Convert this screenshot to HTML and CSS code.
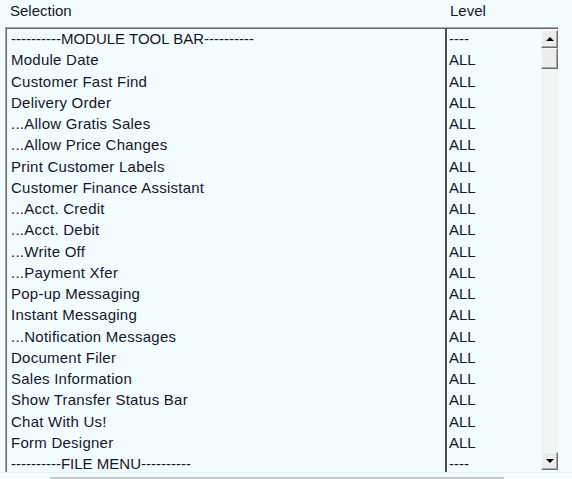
FILE: index.html
```html
<!DOCTYPE html>
<html lang="en">

<head>
    <meta charset="UTF-8">
    <title>Security Selection</title>
    <link rel="stylesheet" href="styles.css">
</head>

<body>
    <div class="head">
        <span class="head-sel">Selection</span>
        <span class="head-lvl">Level</span>
    </div>
    <div class="listbox">
        <div class="rows">
            <div class="row sep"><span class="sel">----------MODULE TOOL BAR----------</span><span class="lvl">----</span></div>
            <div class="row"><span class="sel">Module Date</span><span class="lvl">ALL</span></div>
            <div class="row"><span class="sel">Customer Fast Find</span><span class="lvl">ALL</span></div>
            <div class="row"><span class="sel">Delivery Order</span><span class="lvl">ALL</span></div>
            <div class="row"><span class="sel">...Allow Gratis Sales</span><span class="lvl">ALL</span></div>
            <div class="row"><span class="sel">...Allow Price Changes</span><span class="lvl">ALL</span></div>
            <div class="row"><span class="sel">Print Customer Labels</span><span class="lvl">ALL</span></div>
            <div class="row"><span class="sel">Customer Finance Assistant</span><span class="lvl">ALL</span></div>
            <div class="row"><span class="sel">...Acct. Credit</span><span class="lvl">ALL</span></div>
            <div class="row"><span class="sel">...Acct. Debit</span><span class="lvl">ALL</span></div>
            <div class="row"><span class="sel">...Write Off</span><span class="lvl">ALL</span></div>
            <div class="row"><span class="sel">...Payment Xfer</span><span class="lvl">ALL</span></div>
            <div class="row"><span class="sel">Pop-up Messaging</span><span class="lvl">ALL</span></div>
            <div class="row"><span class="sel">Instant Messaging</span><span class="lvl">ALL</span></div>
            <div class="row"><span class="sel">...Notification Messages</span><span class="lvl">ALL</span></div>
            <div class="row"><span class="sel">Document Filer</span><span class="lvl">ALL</span></div>
            <div class="row"><span class="sel">Sales Information</span><span class="lvl">ALL</span></div>
            <div class="row"><span class="sel">Show Transfer Status Bar</span><span class="lvl">ALL</span></div>
            <div class="row"><span class="sel">Chat With Us!</span><span class="lvl">ALL</span></div>
            <div class="row"><span class="sel">Form Designer</span><span class="lvl">ALL</span></div>
            <div class="row sep"><span class="sel">----------FILE MENU----------</span><span class="lvl">----</span></div>
        </div>
        <div class="scrollbar">
            <div class="sb-btn"><span class="arrow up"></span></div>
            <div class="sb-thumb"></div>
            <div class="sb-track"></div>
            <div class="sb-btn"><span class="arrow down"></span></div>
        </div>
    </div>
    <div class="footer">
        <div class="footer-bar"></div>
    </div>
</body>

</html>
```

FILE: styles.css
```css
body {
    margin: 0;
    height: 479px;
    overflow: hidden;
    background-color: #f3fcff;
    color: #16162a;
    font-family: "Liberation Sans", Arial, sans-serif;
    font-size: 15px;
}

.head {
    display: flex;
    height: 27px;
    padding-top: 2px;
    box-sizing: border-box;
    line-height: 18px;
}

.head-sel {
    width: 450px;
    padding-left: 10px;
    box-sizing: border-box;
}

.listbox {
    display: flex;
    margin-left: 5px;
    width: 553px;
    height: 445px;
    border-top: 1px solid #a6a6a6;
    border-left: 1px solid #a6a6a6;
    box-shadow: inset 1px 1px 0 #6a6a6a;
    box-sizing: border-box;
    padding: 0 0 0 2px;
    overflow: hidden;
}

.rows {
    display: flex;
    flex-direction: column;
    flex: 1;
}

.row {
    display: flex;
    flex-shrink: 0;
    height: 21.25px;
    line-height: 21px;
}

.sel {
    width: 439px;
    padding-left: 3px;
    box-sizing: border-box;
    border-right: 2px solid #505050;
    white-space: nowrap;
    letter-spacing: 0.25px;
}

.sep .sel {
    letter-spacing: 0;
}

.lvl {
    padding-left: 2px;
}

.scrollbar {
    display: flex;
    flex-direction: column;
    width: 17px;
    padding: 2px 0 2px;
}

.sb-btn,
.sb-thumb {
    height: 18px;
    flex-shrink: 0;
    background-color: #ececec;
    border-top: 1px solid #f8f8f8;
    border-left: 1px solid #f8f8f8;
    border-right: 1px solid #6e6e6e;
    border-bottom: 1px solid #6e6e6e;
    box-shadow: inset -1px -1px 0 #a8a8a8;
    box-sizing: border-box;
    display: flex;
    align-items: center;
    justify-content: center;
}

.sb-thumb {
    height: 21px;
}

.sb-track {
    flex: 1;
    background-color: #f6f8f8;
    background-image: repeating-conic-gradient(#eaeeee 0 25%, #f9fbfb 0 50%);
    background-size: 2px 2px;
}

.arrow {
    width: 0;
    height: 0;
    border-left: 4px solid transparent;
    border-right: 4px solid transparent;
}

.arrow.up {
    border-bottom: 4px solid #000;
}

.arrow.down {
    border-top: 4px solid #000;
}

.footer {
    border-top: 1px solid #e6eef0;
    height: 7px;
    box-sizing: border-box;
    padding: 4px 0 0 50px;
}

.footer-bar {
    width: 454px;
    height: 2px;
    background-color: #c8cacc;
}
```
